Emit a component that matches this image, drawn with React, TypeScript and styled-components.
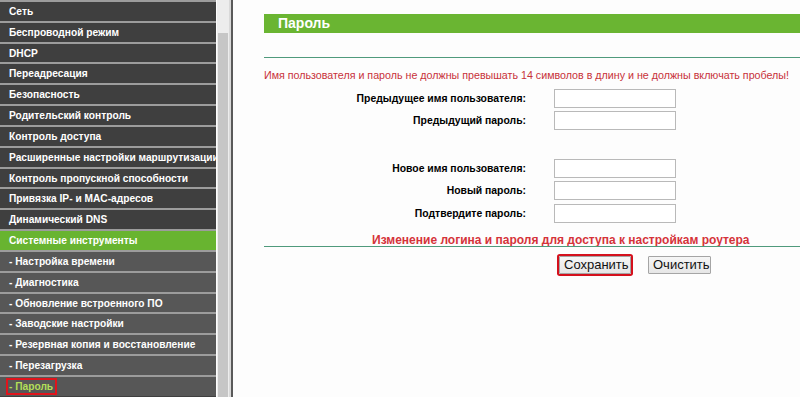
import React from "react";
import styled, { createGlobalStyle } from "styled-components";

const Global = createGlobalStyle`
  html, body { margin: 0; padding: 0; background: #fdfdfd; overflow: hidden; }
  body { font-family: "Liberation Sans", Arial, sans-serif; }
  * { box-sizing: border-box; }
`;

const Page = styled.div`
  display: flex;
  width: 800px;
  height: 397px;
  overflow: hidden;
  background: #fdfdfd;
`;

const Menu = styled.nav`
  width: 216px;
  flex: none;
  background: #3f3f3f;
  display: flex;
  flex-direction: column;
`;

type Variant = "main" | "sub" | "active" | "current";

const bg: Record<Variant, string> = {
  main: "#3f3f3f",
  sub: "#575757",
  active: "#68b430",
  current: "#575757",
};

const MenuItem = styled.div<{ $variant: Variant }>`
  flex: none;
  height: 20.83px;
  border-top: 2px solid #9c9c9c;
  padding-left: 9px;
  display: flex;
  align-items: center;
  font-size: 10.2px;
  font-weight: bold;
  color: ${(p) => (p.$variant === "current" ? "#b4df58" : "#ffffff")};
  background: ${(p) => bg[p.$variant]};
  white-space: nowrap;
  overflow: hidden;
`;

const Marked = styled.span`
  border: 2px solid #e0141c;
  margin-left: -3px;
  padding: 0 2px 0 1px;
  line-height: 13px;
`;

const ScrollTrack = styled.div`
  width: 12px;
  margin-left: 1px;
  flex: none;
  background: #ededed;
  padding-top: 33px;
  display: flex;
  flex-direction: column;
`;

const ScrollThumb = styled.div`
  flex: 1;
  margin: 0 1px;
  background: #c6c6c6;
`;

const Divider = styled.div`
  width: 4px;
  flex: none;
  background: #d9d9d9;
  border-right: 2px solid #5a5a5a;
`;

const Content = styled.main`
  flex: 1;
  min-width: 0;
  padding: 14px 0 0 31px;
  display: flex;
  flex-direction: column;
`;

const TitleBar = styled.div`
  height: 19px;
  background: #6ab532;
  color: #fff;
  font-size: 14px;
  font-weight: bold;
  line-height: 19px;
  padding-left: 14px;
`;

const Rule = styled.div<{ $top: number }>`
  height: 1px;
  background: #4f9a7c;
  margin-top: ${(p) => p.$top}px;
`;

const Warning = styled.div`
  margin-top: 10px;
  color: #c8323a;
  font-size: 10.7px;
  line-height: 14px;
  white-space: nowrap;
`;

const FormGroup = styled.div<{ $top: number }>`
  display: grid;
  grid-template-columns: 262px 122px;
  grid-auto-rows: 22.5px;
  column-gap: 28px;
  align-items: center;
  margin-top: ${(p) => p.$top}px;
`;

const Label = styled.label`
  text-align: right;
  font-size: 10.4px;
  font-weight: bold;
  color: #000;
  white-space: nowrap;
`;

const Field = styled.input`
  width: 122px;
  height: 19px;
  border: 1px solid #b9b9b9;
  background: #fff;
  margin: 0;
  padding: 0 3px;
  font-size: 12px;
`;

const Note = styled.div`
  margin-top: 9px;
  padding-left: 108px;
  color: #d5333a;
  font-size: 12px;
  font-weight: bold;
  line-height: 12px;
  white-space: nowrap;
`;

const Buttons = styled.div`
  display: flex;
  gap: 17px;
  margin-top: 9px;
  padding-left: 295px;
`;

const Button = styled.button<{ $marked?: boolean }>`
  height: 18px;
  padding: 0 4px;
  font-family: "Liberation Sans", Arial, sans-serif;
  font-size: 13px;
  line-height: 16px;
  color: #111;
  background: linear-gradient(#f6f6f6, #e6e6e6);
  border: 1px solid #a5a5a5;
  border-radius: 1px;
  ${(p) => (p.$marked ? "box-shadow: 0 0 0 2px #d4101c; width: 72px;" : "width: 63px;")}
`;

const items: { text: string; v: Variant }[] = [
  { text: "Сеть", v: "main" },
  { text: "Беспроводной режим", v: "main" },
  { text: "DHCP", v: "main" },
  { text: "Переадресация", v: "main" },
  { text: "Безопасность", v: "main" },
  { text: "Родительский контроль", v: "main" },
  { text: "Контроль доступа", v: "main" },
  { text: "Расширенные настройки маршрутизации", v: "main" },
  { text: "Контроль пропускной способности", v: "main" },
  { text: "Привязка IP- и MAC-адресов", v: "main" },
  { text: "Динамический DNS", v: "main" },
  { text: "Системные инструменты", v: "active" },
  { text: "- Настройка времени", v: "sub" },
  { text: "- Диагностика", v: "sub" },
  { text: "- Обновление встроенного ПО", v: "sub" },
  { text: "- Заводские настройки", v: "sub" },
  { text: "- Резервная копия и восстановление", v: "sub" },
  { text: "- Перезагрузка", v: "sub" },
  { text: "- Пароль", v: "current" },
];

export default function App() {
  return (
    <>
      <Global />
      <Page>
        <Menu>
          {items.map((it) => (
            <MenuItem key={it.text} $variant={it.v}>
              {it.v === "current" ? <Marked>{it.text}</Marked> : it.text}
            </MenuItem>
          ))}
        </Menu>
        <ScrollTrack>
          <ScrollThumb />
        </ScrollTrack>
        <Divider />
        <Content>
          <TitleBar>Пароль</TitleBar>
          <Rule $top={24} />
          <Warning>
            Имя пользователя и пароль не должны превышать 14 символов в длину и не должны включать пробелы!
          </Warning>
          <FormGroup $top={5}>
            <Label>Предыдущее имя пользователя:</Label>
            <Field type="text" />
            <Label>Предыдущий пароль:</Label>
            <Field type="password" />
          </FormGroup>
          <FormGroup $top={25}>
            <Label>Новое имя пользователя:</Label>
            <Field type="text" />
            <Label>Новый пароль:</Label>
            <Field type="password" />
            <Label>Подтвердите пароль:</Label>
            <Field type="password" />
          </FormGroup>
          <Note>Изменение логина и пароля для доступа к настройкам роутера</Note>
          <Rule $top={0} />
          <Buttons>
            <Button $marked>Сохранить</Button>
            <Button>Очистить</Button>
          </Buttons>
        </Content>
      </Page>
    </>
  );
}
